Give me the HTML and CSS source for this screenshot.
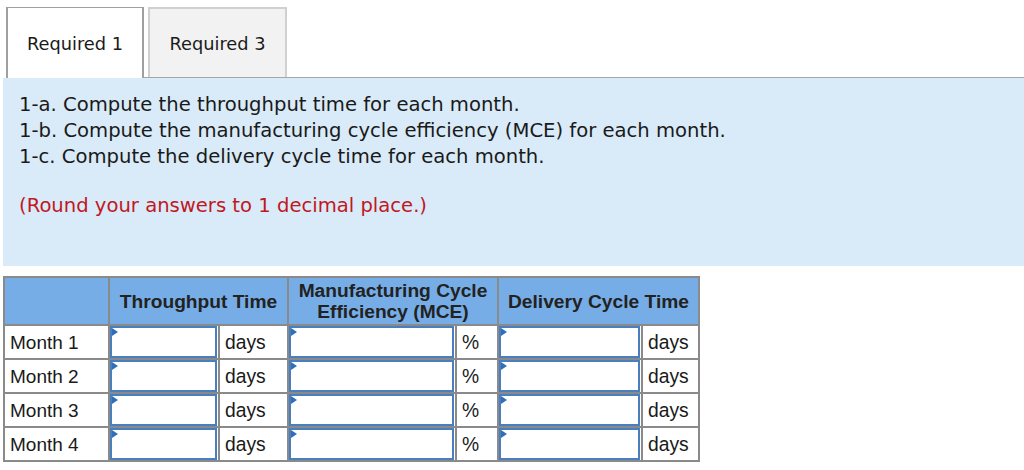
FILE: index.html
```html
<!DOCTYPE html>
<html>
<head>
<meta charset="utf-8">
<link rel="stylesheet" href="styles.css">
</head>
<body>
<div class="tabs">
  <div class="tab active">Required 1</div>
  <div class="tab">Required 3</div>
  <div class="fill"></div>
</div>
<div class="panel">
  <p class="q">1-a. Compute the throughput time for each month.<br>1-b. Compute the manufacturing cycle efficiency (MCE) for each month.<br>1-c. Compute the delivery cycle time for each month.</p>
  <p class="note">(Round your answers to 1 decimal place.)</p>
</div>
<table class="grid">
  <colgroup>
    <col class="c-label"><col class="c-in1"><col class="c-u1"><col class="c-in2"><col class="c-u2"><col class="c-in3"><col class="c-u3">
  </colgroup>
  <thead>
    <tr>
      <th></th>
      <th colspan="2">Throughput Time</th>
      <th colspan="2">Manufacturing Cycle<br>Efficiency (MCE)</th>
      <th colspan="2">Delivery Cycle Time</th>
    </tr>
  </thead>
  <tbody>
    <tr><td class="lbl">Month 1</td><td class="in"><div class="box"></div></td><td class="unit">days</td><td class="in"><div class="box"></div></td><td class="unit">%</td><td class="in"><div class="box"></div></td><td class="unit">days</td></tr>
    <tr><td class="lbl">Month 2</td><td class="in"><div class="box"></div></td><td class="unit">days</td><td class="in"><div class="box"></div></td><td class="unit">%</td><td class="in"><div class="box"></div></td><td class="unit">days</td></tr>
    <tr><td class="lbl">Month 3</td><td class="in"><div class="box"></div></td><td class="unit">days</td><td class="in"><div class="box"></div></td><td class="unit">%</td><td class="in"><div class="box"></div></td><td class="unit">days</td></tr>
    <tr><td class="lbl">Month 4</td><td class="in"><div class="box"></div></td><td class="unit">days</td><td class="in"><div class="box"></div></td><td class="unit">%</td><td class="in"><div class="box"></div></td><td class="unit">days</td></tr>
  </tbody>
</table>
</body>
</html>
```
FILE: styles.css
```css
body {
  margin: 0;
  background: #fff;
  font-family: "DejaVu Sans", Verdana, sans-serif;
  color: #1a1a1a;
}
.tabs {
  display: flex;
  align-items: flex-end;
  margin: 7px 0 0 6px;
  height: 71px;
  border-bottom: 1px solid #a6a6a6;
  box-sizing: border-box;
}
.tab {
  box-sizing: border-box;
  height: 70px;
  display: flex;
  align-items: center;
  justify-content: center;
  font-size: 17.8px;
  color: #1a1a1a;
  padding-top: 1px;
}
.tab.active {
  width: 138px;
  height: 71px;
  margin-bottom: -1px;
  background: #fff;
  border: 1px solid #a0a0a0;
  border-left-width: 2px;
  border-right-width: 2px;
  border-bottom: none;
  margin-right: 4px;
}
.tab:not(.active) {
  width: 139px;
  background: #f2f2f2;
  border: 2px solid #d0d0d0;
  border-bottom: none;
}
.fill { flex: 1; }
.panel {
  margin-left: 3px;
  background: #d9eaf8;
  height: 188px;
  box-sizing: border-box;
  padding: 14px 0 0 16px;
}
.panel p {
  margin: 0;
  font-size: 19.6px;
  line-height: 26px;
}
.panel .note {
  margin-top: 23px;
  color: #c0181f;
}
.grid {
  margin: 10px 0 0 3px;
  border-collapse: collapse;
  font-family: "Liberation Sans", Arial, sans-serif;
  border: 2px solid #8a8a8a;
}
.c-label { width: 105px; }
.c-in1 { width: 110px; }
.c-u1 { width: 69px; }
.c-in2 { width: 168px; }
.c-u2 { width: 42px; }
.c-in3 { width: 144px; }
.c-u3 { width: 57px; }
.grid th {
  background: #77ade6;
  border: 2px solid #8a8a8a;
  height: 46px;
  padding: 0;
  font-size: 19.2px;
  line-height: 21px;
  font-weight: bold;
  color: #222;
}
.grid td {
  border: 2px solid #8a8a8a;
  height: 32px;
  padding: 0;
  font-size: 19px;
  line-height: 22px;
  color: #1a1a1a;
  background: #fff;
}
.grid td.lbl { padding: 2px 0 0 5px; height: 30px; }
.grid td.unit { padding: 2px 0 0 5px; height: 30px; font-size: 19.3px; }
.grid td.in { padding: 0; }
.box {
  position: relative;
  height: 28px;
  margin: 0 1px 0 0;
  border: 2px solid #4a7fbf;
  background: #fff;
}
.box::before {
  content: "";
  position: absolute;
  left: 0;
  top: 0;
  border-left: 6px solid #2f6fba;
  border-top: 4px solid transparent;
  border-bottom: 4px solid transparent;
}
```
